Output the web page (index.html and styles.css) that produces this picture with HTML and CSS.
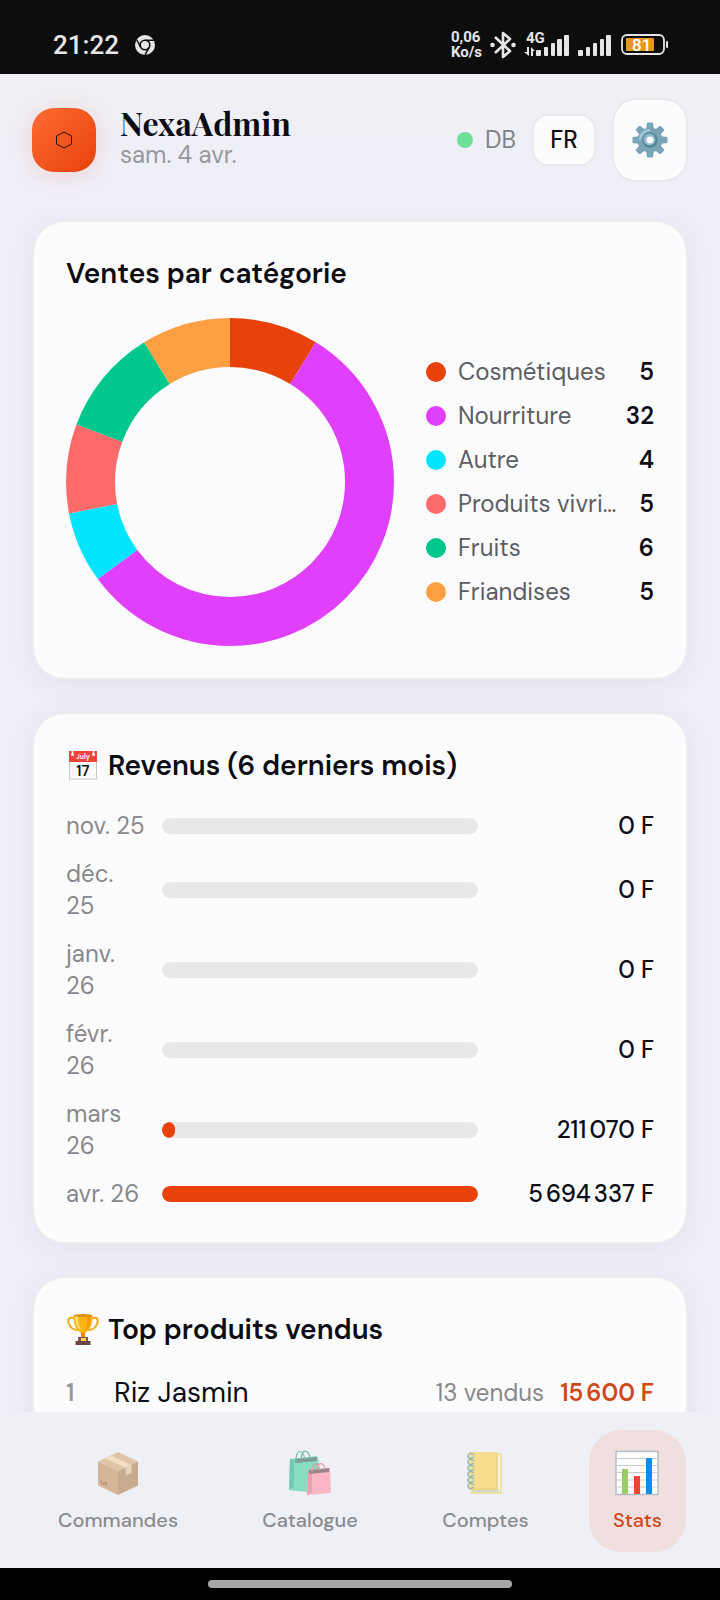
FILE: index.html
```html
<!DOCTYPE html>
<html lang="fr">
<head>
    <meta charset="UTF-8">
    <meta name="viewport" content="width=device-width, initial-scale=1.0">
    <title>NexaAdmin</title>
    <link rel="stylesheet" href="styles.css">
</head>
<body>
    <div class="status-bar">
        <div class="status-left">
            <span class="clock">21:22</span>
            <svg width="20" height="20" viewBox="0 0 20 20">
                <circle cx="10" cy="10" r="10" fill="#e6e6e6"/>
                <circle cx="10" cy="10" r="5.6" fill="#0d0d0d"/>
                <circle cx="10" cy="10" r="4" fill="#e6e6e6"/>
                <path d="M10 5.200H19M5.800 12.400L1.800 5M14.200 12.400L10 19.800" stroke="#0d0d0d" stroke-width="1.500" fill="none"/>
            </svg>
        </div>
        <div class="status-right">
            <span class="speed">0,06<br>Ko/s</span>
            <svg width="26" height="28" viewBox="0 0 26 28" fill="none" stroke="#e6e6e6" stroke-width="2.600" stroke-linejoin="round">
                <path d="M5 6L20 20L13 26V2L20 8L5 22"/>
                <circle cx="2.500" cy="14" r="1" fill="#e6e6e6"/>
                <circle cx="23.500" cy="14" r="1" fill="#e6e6e6"/>
            </svg>
            <svg width="46" height="28" viewBox="0 0 46 28" fill="#e6e6e6">
                <text x="2" y="12" class="net-label">4G</text>
                <path d="M3 16v5H0l5 4v-9zM7 25v-9l4 4H9v5z"/>
                <rect x="12" y="19" width="5" height="6" rx="1"/>
                <rect x="20" y="16" width="4" height="9" rx="1"/>
                <rect x="27" y="12" width="4" height="13" rx="1"/>
                <rect x="33" y="8" width="5" height="17" rx="1"/>
                <rect x="40" y="4" width="5" height="21" rx="1"/>
            </svg>
            <svg width="35" height="28" viewBox="0 0 35 28" fill="#e6e6e6">
                <rect x="0" y="19" width="5" height="6" rx="1"/>
                <rect x="8" y="16" width="4" height="9" rx="1"/>
                <rect x="15" y="12" width="4" height="13" rx="1"/>
                <rect x="22" y="8" width="4" height="17" rx="1"/>
                <rect x="28" y="4" width="5" height="21" rx="1"/>
            </svg>
            <svg width="48" height="22" viewBox="0 0 48 22">
                <rect x="1" y="1" width="42" height="19" rx="5" fill="none" stroke="#e6e6e6" stroke-width="1.800"/>
                <rect x="5" y="4" width="28" height="13" rx="1" fill="#e6981e"/>
                <rect x="45" y="7" width="2" height="7" rx="1" fill="#e6e6e6"/>
                <text x="11" y="17" class="battery-label">81</text>
            </svg>
        </div>
    </div>

    <header class="topbar">
        <div class="logo">
            <svg width="18" height="20" viewBox="0 0 18 20">
                <path d="M9 2L16.500 6V14L9 18L1.500 14V6Z" fill="none" stroke="#2a1210" stroke-width="1"/>
            </svg>
        </div>
        <div class="brand">
            <h1>NexaAdmin</h1>
            <p>sam. 4 avr.</p>
        </div>
        <div class="db-status"><span class="db-dot"></span>DB</div>
        <button class="btn-lang" type="button">FR</button>
        <button class="btn-settings" type="button" aria-label="Paramètres">
            <svg width="36" height="36" viewBox="0 0 36 36">
                <g fill="#78a4b6">
                    <path id="tooth" d="M15 0.500h6l1 8h-8z"/>
                    <use href="#tooth" transform="rotate(45 18 18)"/>
                    <use href="#tooth" transform="rotate(90 18 18)"/>
                    <use href="#tooth" transform="rotate(135 18 18)"/>
                    <use href="#tooth" transform="rotate(180 18 18)"/>
                    <use href="#tooth" transform="rotate(225 18 18)"/>
                    <use href="#tooth" transform="rotate(270 18 18)"/>
                    <use href="#tooth" transform="rotate(315 18 18)"/>
                    <circle cx="18" cy="18" r="12.500"/>
                </g>
                <path d="M8 18a10 10 0 0 1 10-10" fill="none" stroke="#a3cddd" stroke-width="2"/>
                <circle cx="18" cy="18" r="7.500" fill="#4f7f92"/>
                <circle cx="17.500" cy="17.500" r="6" fill="#8ebccd"/>
                <circle cx="18" cy="18" r="3.500" fill="#fcfcfe"/>
            </svg>
        </button>
    </header>

    <main class="content">
        <section class="card">
            <h2>Ventes par catégorie</h2>
            <div class="chart">
                <svg class="donut" viewBox="0 0 328 328">
                    <g transform="rotate(-90 164 164)" fill="none" stroke-width="49">
                        <circle cx="164" cy="164" r="139.500" pathLength="57" stroke="#e8410a" stroke-dasharray="5 52"/>
                        <circle cx="164" cy="164" r="139.500" pathLength="57" stroke="#e040fb" stroke-dasharray="32 25" stroke-dashoffset="-5"/>
                        <circle cx="164" cy="164" r="139.500" pathLength="57" stroke="#00e5ff" stroke-dasharray="4 53" stroke-dashoffset="-37"/>
                        <circle cx="164" cy="164" r="139.500" pathLength="57" stroke="#ff6b6b" stroke-dasharray="5 52" stroke-dashoffset="-41"/>
                        <circle cx="164" cy="164" r="139.500" pathLength="57" stroke="#00c78c" stroke-dasharray="6 51" stroke-dashoffset="-46"/>
                        <circle cx="164" cy="164" r="139.500" pathLength="57" stroke="#ff9f43" stroke-dasharray="5 52" stroke-dashoffset="-52"/>
                    </g>
                </svg>
                <ul class="legend">
                    <li><span class="dot red"></span><span class="name">Cosmétiques</span><strong>5</strong></li>
                    <li><span class="dot purple"></span><span class="name">Nourriture</span><strong>32</strong></li>
                    <li><span class="dot cyan"></span><span class="name">Autre</span><strong>4</strong></li>
                    <li><span class="dot pink"></span><span class="name">Produits vivri…</span><strong>5</strong></li>
                    <li><span class="dot green"></span><span class="name">Fruits</span><strong>6</strong></li>
                    <li><span class="dot orange"></span><span class="name">Friandises</span><strong>5</strong></li>
                </ul>
            </div>
        </section>

        <section class="card">
            <h2>
                <svg width="34" height="34" viewBox="0 0 34 34">
                    <rect x="3.500" y="3" width="27" height="27" fill="#fafafa" stroke="#c4c8cb"/>
                    <rect x="3" y="2" width="28" height="11" fill="#f04438"/>
                    <path d="M6.500 2v3M27.500 2v3" stroke="#fff" stroke-width="1.500"/>
                    <circle cx="6.500" cy="5.500" r="1.500" fill="#fff"/>
                    <circle cx="27.500" cy="5.500" r="1.500" fill="#fff"/>
                    <text x="17" y="10" class="cal-month">July</text>
                    <text x="17" y="27" class="cal-day">17</text>
                </svg>
                Revenus (6 derniers mois)
            </h2>
            <ul class="months">
                <li><span class="month">nov. 25</span><span class="bar"></span><span class="amount">0&nbsp;F</span></li>
                <li><span class="month">déc.<br>25</span><span class="bar"></span><span class="amount">0&nbsp;F</span></li>
                <li><span class="month">janv.<br>26</span><span class="bar"></span><span class="amount">0&nbsp;F</span></li>
                <li><span class="month">févr.<br>26</span><span class="bar"></span><span class="amount">0&nbsp;F</span></li>
                <li><span class="month">mars<br>26</span><span class="bar"><span class="fill" style="width: 4%"></span></span><span class="amount">211&#8239;070&nbsp;F</span></li>
                <li><span class="month">avr. 26</span><span class="bar"><span class="fill" style="width: 100%"></span></span><span class="amount">5&#8239;694&#8239;337&nbsp;F</span></li>
            </ul>
        </section>

        <section class="card">
            <h2>
                <svg width="34" height="34" viewBox="0 0 34 34">
                    <path d="M9 6C3 3 1 6 3 11C4.500 15 8 17 12 17M25 6C31 3 33 6 31 11C29.500 15 26 17 22 17" fill="none" stroke="#f5a914" stroke-width="2"/>
                    <path d="M14 18h6l-1 3v4h-4v-4z" fill="#e88a0c"/>
                    <path d="M7.500 2h19c0 9-2 17-9.500 18C9.500 19 7.500 11 7.500 2z" fill="#fbb515"/>
                    <path d="M12 3c0 7 1 11 4 14c-5-1-7-7-7-14z" fill="#ffe36a"/>
                    <path d="M21 3h4c0 7-2 13-6 15c2-4 3-8 2-15z" fill="#f29a0c"/>
                    <ellipse cx="17" cy="2.500" rx="9.500" ry="1.500" fill="#e08a12"/>
                    <path d="M12 24h10v5H12z" fill="#83504b"/>
                    <path d="M9.500 28h15v4h-15z" fill="#6d4542"/>
                    <path d="M15 25h5v3h-5z" fill="#ffd54f"/>
                </svg>
                Top produits vendus
            </h2>
            <ul class="products">
                <li>
                    <span class="rank">1</span>
                    <span class="product">Riz Jasmin</span>
                    <span class="sold">13 vendus</span>
                    <span class="total">15&#8239;600&nbsp;F</span>
                </li>
            </ul>
        </section>
    </main>

    <nav class="tabs">
        <a class="tab" href="#commandes">
            <svg width="44" height="52" viewBox="0 0 44 52">
                <path d="M22 6L42 15.500L22 25L2 15.500z" fill="#e0c4a6"/>
                <path d="M2 15.500L22 25V49L2 39.500z" fill="#d5b698"/>
                <path d="M42 15.500L22 25V49L42 39.500z" fill="#c8aa8e"/>
                <path d="M15 9.500L35 19L29.500 21.500L9 12.300z" fill="#f3dfc5"/>
                <path d="M29.500 21.500L35.500 18.700V27L29.500 29.500z" fill="#e5d2bd"/>
                <path d="M5 34v3l3 1.500v-3M10 37v3M9 36.500l2 1" fill="none" stroke="#a58d78" stroke-width="1"/>
            </svg>
            <span>Commandes</span>
        </a>
        <a class="tab" href="#catalogue">
            <svg width="44" height="52" viewBox="0 0 44 52">
                <path d="M2 13L29 10L31 16V43L19 46L1 44z" fill="#88dcc2"/>
                <path d="M2 13L6 14V41L1 44z" fill="#72cbb1"/>
                <path d="M7 13L29 11V15L7 17z" fill="#7e9b97"/>
                <path d="M8 15C8 2 15 3 17 14M13 13C14 2 21 3 22 13" fill="none" stroke="#75bca9" stroke-width="1.200"/>
                <path d="M20 25L42 22L43 47L19 49z" fill="#fab6c2"/>
                <path d="M20 25L24 27V46L19 49z" fill="#e9a1b0"/>
                <path d="M21 24L41 22V26L21 28z" fill="#97858b"/>
                <path d="M24 26C24 15 31 16 32 25M29 24C30 15 36 16 37 24" fill="none" stroke="#e798a8" stroke-width="1.200"/>
            </svg>
            <span>Catalogue</span>
        </a>
        <a class="tab" href="#comptes">
            <svg width="44" height="52" viewBox="0 0 44 52">
                <path d="M9 8h29v39H9z" fill="#fbf5df" stroke="#eed791" stroke-width="1.500"/>
                <path d="M7 43h29v3H10z" fill="#cbdccb"/>
                <path d="M6 6H32Q35 6 35 9V41Q35 44 32 44H6z" fill="#f6dc8c"/>
                <path d="M34 10V41Q34 43 31 43H9" fill="none" stroke="#e8c979" stroke-width="1"/>
                <path d="M11 9c-3-3-7-1-6 2s5 1 6 0M11 15c-3-3-7-1-6 2s5 1 6 0M11 21c-3-3-7-1-6 2s5 1 6 0M11 27c-3-3-7-1-6 2s5 1 6 0M11 33c-3-3-7-1-6 2s5 1 6 0M11 39c-3-3-7-1-6 2s5 1 6 0" fill="none" stroke="#8fb9be" stroke-width="1.300"/>
            </svg>
            <span>Comptes</span>
        </a>
        <a class="tab active" href="#stats">
            <svg width="44" height="52" viewBox="0 0 44 52">
                <rect x="1" y="5.500" width="42" height="43" fill="#fff" stroke="#b3bfc5" stroke-width="1.500"/>
                <path d="M1 12.500h42M1 19.500h42M1 26.500h42M1 34h42M1 41h42" stroke="#c5ced2" stroke-width="1"/>
                <path d="M7 23h6v25H7z" fill="#9ccc65"/>
                <path d="M19 30h6v18h-6z" fill="#f44336"/>
                <path d="M31 12h6v36h-6z" fill="#0a8fe6"/>
            </svg>
            <span>Stats</span>
        </a>
    </nav>

    <div class="gesture-bar"><span></span></div>
</body>
</html>
```

FILE: styles.css
```css
* {
    box-sizing: border-box;
    margin: 0;
    padding: 0;
}

body {
    font-family: "DM Sans", Inter, sans-serif;
    font-size: 24px;
    line-height: 32px;
    color: #0c0c14;
    background: #efeffa;
    height: 100vh;
    display: flex;
    flex-direction: column;
    overflow: hidden;
}

svg {
    display: block;
    flex-shrink: 0;
    overflow: visible;
}

ul {
    list-style: none;
}

/* phone status bar */
.status-bar {
    height: 74px;
    padding: 16px 51px 0 53px;
    display: flex;
    flex-shrink: 0;
    align-items: center;
    justify-content: space-between;
    background: #0d0d0d;
    color: #e6e6e6;
    font-family: Roboto, sans-serif;
}

.status-left {
    display: flex;
    align-items: center;
    gap: 16px;
}

.status-right {
    display: flex;
    align-items: center;
    gap: 8px;
}

.clock {
    font-size: 26px;
    font-weight: 500;
}

.speed {
    font-size: 15px;
    font-weight: 700;
    line-height: 15px;
}

.net-label {
    font-size: 15px;
    font-weight: 700;
}

.battery-label {
    font-size: 17px;
    font-weight: 500;
    fill: #fff;
}

/* header */
.topbar {
    height: 132px;
    padding: 0 32px;
    display: flex;
    flex-shrink: 0;
    align-items: center;
    gap: 16px;
    background: linear-gradient(#f0eff3, #efeffa);
}

.logo {
    width: 64px;
    height: 64px;
    border-radius: 22px;
    display: flex;
    align-items: center;
    justify-content: center;
    background: linear-gradient(135deg, #ff6b35, #e8410a);
    box-shadow: 0 4px 24px rgba(232, 65, 10, 0.15);
}

.brand {
    flex: 1;
    padding-left: 8px;
}

.brand h1 {
    margin-bottom: 2px;
    font-family: "Playfair Display", "Liberation Serif", serif;
    font-size: 32px;
    font-weight: 700;
    line-height: 28px;
}

.brand p {
    color: #97979c;
}

.db-status {
    display: flex;
    align-items: center;
    gap: 12px;
    color: #828287;
}

.db-dot {
    width: 16px;
    height: 16px;
    border-radius: 50%;
    background: #6ee098;
}

.btn-lang,
.btn-settings {
    display: flex;
    align-items: center;
    justify-content: center;
    font: inherit;
    color: inherit;
    background: #fcfcfe;
    border: 2px solid #e8e8ed;
}

.btn-lang {
    width: 64px;
    height: 52px;
    border-radius: 16px;
    font-weight: 500;
}

.btn-settings {
    width: 76px;
    height: 84px;
    border-radius: 24px;
}

/* cards */
.content {
    flex: 1;
    min-height: 0;
    padding: 14px 32px;
    overflow: hidden;
}

.card {
    padding: 32px;
    margin-bottom: 32px;
    border: 2px solid #ebebf0;
    border-radius: 32px;
    background: #fcfcfe;
    background-clip: padding-box;
    box-shadow: 0 4px 32px rgba(0, 0, 0, 0.06);
}

.card h2 {
    display: flex;
    align-items: center;
    gap: 8px;
    margin-bottom: 24px;
    font-size: 28px;
    font-weight: 600;
    line-height: 40px;
}

.cal-month {
    font-size: 7px;
    font-weight: 600;
    text-anchor: middle;
    fill: #fff;
}

.cal-day {
    font-size: 15px;
    font-weight: 600;
    text-anchor: middle;
    fill: #111;
}

.chart {
    display: flex;
    align-items: center;
    gap: 32px;
}

.donut {
    width: 328px;
}

.legend {
    flex: 1;
    min-width: 0;
    display: flex;
    flex-direction: column;
    gap: 12px;
}

.legend li {
    display: flex;
    align-items: center;
    gap: 12px;
}

.dot {
    width: 20px;
    height: 20px;
    border-radius: 50%;
    flex-shrink: 0;
}

.red { background: #e8410a; }
.purple { background: #e040fb; }
.cyan { background: #00e5ff; }
.pink { background: #ff6b6b; }
.green { background: #00c78c; }
.orange { background: #ff9f43; }

.name {
    flex: 1;
    color: #5c5c62;
    white-space: nowrap;
}

.legend strong {
    font-weight: 600;
}

.months {
    display: flex;
    flex-direction: column;
    gap: 16px;
}

.months li {
    display: flex;
    align-items: center;
    gap: 16px;
}

.month {
    width: 80px;
    color: #88888c;
    white-space: nowrap;
}

.bar {
    flex: 1;
    height: 16px;
    border-radius: 8px;
    background: #e8e8e8;
    overflow: hidden;
}

.fill {
    display: block;
    height: 100%;
    border-radius: 8px;
    background: #e8410a;
}

.amount {
    width: 160px;
    font-weight: 500;
    text-align: right;
}

.products li {
    display: flex;
    align-items: center;
    gap: 16px;
    line-height: 38px;
}

.rank {
    width: 32px;
    font-weight: 600;
    color: #9a9a9e;
}

.product {
    flex: 1;
    font-size: 28px;
}

.sold {
    color: #88888c;
}

.total {
    font-weight: 600;
    color: #d2481a;
}

/* bottom navigation */
.tabs {
    padding: 18px 34px 16px;
    display: flex;
    flex-shrink: 0;
    justify-content: space-between;
    background: #eff0f6;
}

.tab {
    display: flex;
    flex-direction: column;
    align-items: center;
    gap: 6px;
    padding: 16px 24px;
    border-radius: 32px;
    font-size: 20px;
    font-weight: 500;
    color: #8a8a90;
    text-decoration: none;
}

.tab.active {
    background: #f0dfdf;
    color: #d2481a;
}

.gesture-bar {
    height: 32px;
    display: flex;
    flex-shrink: 0;
    align-items: center;
    justify-content: center;
    background: #000;
}

.gesture-bar span {
    width: 304px;
    height: 8px;
    border-radius: 4px;
    background: #a8a8a8;
}
```
